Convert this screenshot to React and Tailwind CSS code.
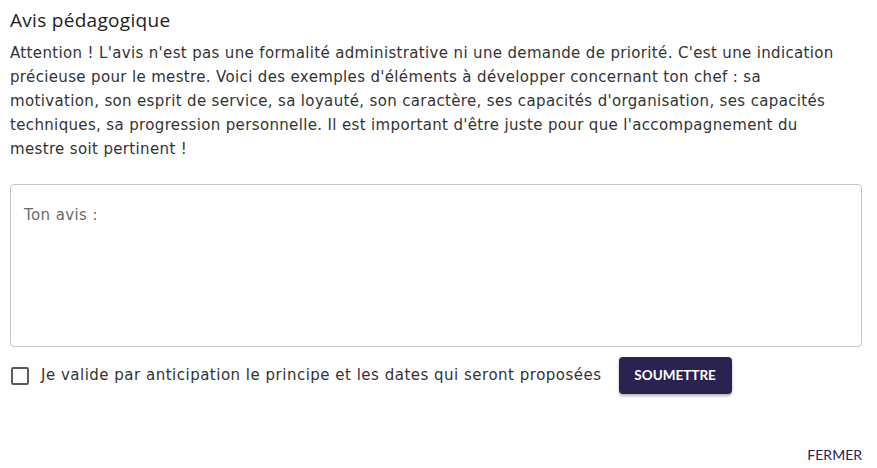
import React from "react";

export default function App() {
  return (
    <div className="w-[877px] h-[468px] bg-white flex flex-col text-[#333]">
      <div className="px-[10px] pt-[8px]">
        <h2 className="text-[19px] leading-[24px] tracking-[0.3px] text-[#222] font-['Open_Sans',sans-serif]">Avis pédagogique</h2>
        <p className="mt-[9px] text-[15px] leading-[24px] tracking-[0.35px] font-['DejaVu_Sans',sans-serif] w-[852px]">
          Attention ! L'avis n'est pas une formalité administrative ni une demande de priorité. C'est une indication<br />
          précieuse pour le mestre. Voici des exemples d'éléments à développer concernant ton chef : sa<br />
          motivation, son esprit de service, sa loyauté, son caractère, ses capacités d'organisation, ses capacités<br />
          techniques, sa progression personnelle. Il est important d'être juste pour que l'accompagnement du<br />
          mestre soit pertinent !
        </p>
        <div className="mt-[23px] h-[163px] w-[852px] border border-[#c4c4c4] rounded-[4px] px-[13px] pt-[17px]">
          <span className="text-[15px] tracking-[0.4px] text-[#6b6b6b] font-['DejaVu_Sans',sans-serif]">Ton avis :</span>
        </div>
        <div className="mt-[10px] flex items-center h-[37px]">
          <div className="w-[18px] h-[18px] border-2 border-[#5a5a5a] rounded-[2px] ml-[1px]"></div>
          <span className="ml-[12px] text-[15px] tracking-[0.5px] font-['DejaVu_Sans',sans-serif]">Je valide par anticipation le principe et les dates qui seront proposées</span>
          <button className="ml-[17px] h-[37px] w-[113px] rounded-[4px] bg-[#2a2250] text-white text-[13.5px] font-bold font-['Lato',sans-serif] shadow-[0_2px_3px_rgba(0,0,0,0.3)]">SOUMETTRE</button>
        </div>
      </div>
      <div className="mt-auto flex justify-end pr-[15px] pb-[3px]">
        <span className="text-[14px] text-[#2a2250] font-['Lato',sans-serif]">FERMER</span>
      </div>
    </div>
  );
}
